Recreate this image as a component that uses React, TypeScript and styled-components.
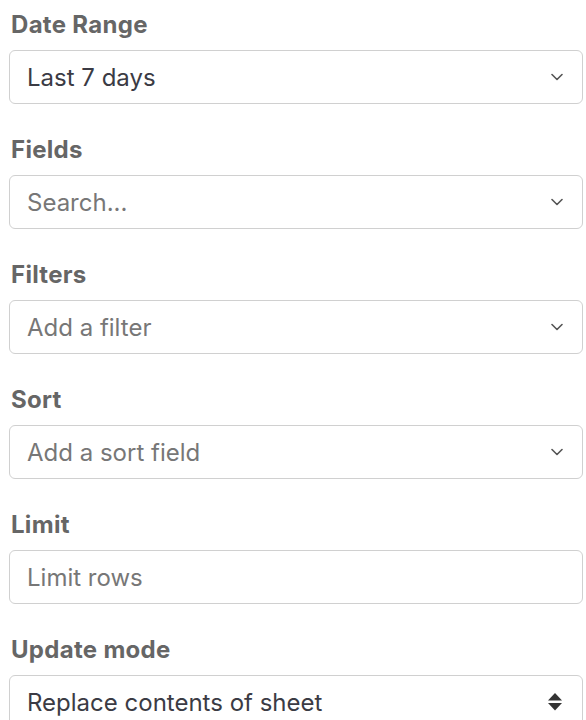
import React from "react";
import styled, { createGlobalStyle } from "styled-components";

const GlobalStyle = createGlobalStyle`
  html, body {
    margin: 0;
    padding: 0;
    background: #fff;
  }
  body {
    font-family: Inter, "Liberation Sans", Arial, sans-serif;
  }
`;

const Panel = styled.div`
  display: flex;
  flex-direction: column;
  gap: 21px;
  padding: 0 3px 0 9px;
`;

const Group = styled.div`
  display: flex;
  flex-direction: column;
  gap: 10px;
  padding-top: 10px;
`;

const Label = styled.label`
  font-size: 24px;
  line-height: 30px;
  font-weight: 700;
  color: #666;
  padding-left: 2px;
  letter-spacing: 0.3px;
`;

const Control = styled.div`
  box-sizing: border-box;
  height: 54px;
  display: flex;
  align-items: center;
  justify-content: space-between;
  padding: 0 19px 0 17px;
  border: 1.5px solid #d0d0d0;
  border-radius: 6px;
  background: #fff;
`;

const Value = styled.span<{ $placeholder?: boolean }>`
  font-size: 24px;
  color: ${(p) => (p.$placeholder ? "#777" : "#3b3b44")};
  white-space: nowrap;
`;

const TextInput = styled.input`
  box-sizing: border-box;
  width: 100%;
  height: 54px;
  padding: 0 17px;
  border: 1.5px solid #d0d0d0;
  border-radius: 6px;
  font-family: inherit;
  font-size: 24px;
  color: #3b3b44;
  outline: none;
  &::placeholder {
    color: #777;
  }
`;

const Chevron = () => (
  <svg width="12" height="8" viewBox="0 0 12 8">
    <path d="M1 1.5 L6 6.5 L11 1.5" fill="none" stroke="#555" strokeWidth="1.6" strokeLinecap="round" strokeLinejoin="round" />
  </svg>
);

const UpDown = () => (
  <svg width="16" height="20" viewBox="0 0 16 20">
    <path d="M8 1 L15 8.5 L1 8.5 Z" fill="#333" />
    <path d="M1 11 L15 11 L8 18.5 Z" fill="#333" />
  </svg>
);

type Field = {
  label: string;
  text: string;
  placeholder?: boolean;
  kind: "select" | "input" | "native";
};

const fields: Field[] = [
  { label: "Date Range", text: "Last 7 days", kind: "select" },
  { label: "Fields", text: "Search...", placeholder: true, kind: "select" },
  { label: "Filters", text: "Add a filter", placeholder: true, kind: "select" },
  { label: "Sort", text: "Add a sort field", placeholder: true, kind: "select" },
  { label: "Limit", text: "Limit rows", kind: "input" },
  { label: "Update mode", text: "Replace contents of sheet", kind: "native" },
];

export default function App() {
  return (
    <>
      <GlobalStyle />
      <Panel>
        {fields.map((f) => (
          <Group key={f.label}>
            <Label>{f.label}</Label>
            {f.kind === "input" ? (
              <TextInput placeholder={f.text} />
            ) : (
              <Control>
                <Value $placeholder={f.placeholder}>{f.text}</Value>
                {f.kind === "native" ? <UpDown /> : <Chevron />}
              </Control>
            )}
          </Group>
        ))}
      </Panel>
    </>
  );
}
